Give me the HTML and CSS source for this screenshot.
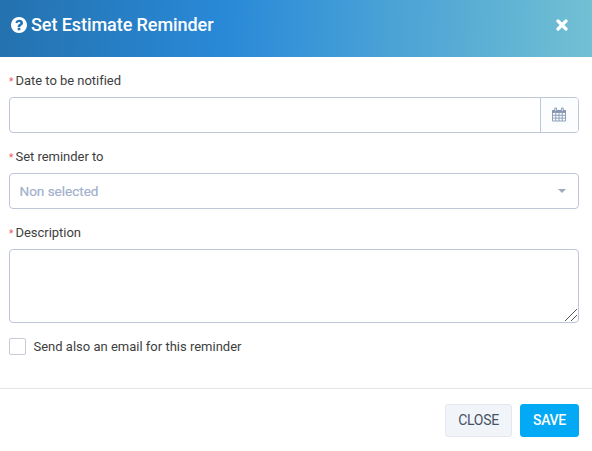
FILE: index.html
```html
<!DOCTYPE html>
<html lang="en">
<head>
<meta charset="utf-8">
<title>Set Estimate Reminder</title>
<link rel="stylesheet" href="styles.css">
</head>
<body>
<form class="modal">
  <header class="modal-header">
    <svg class="help" viewBox="128 128 1536 1536"><path fill="currentColor" d="M1024 1376v-192q0-14-9-23t-23-9h-192q-14 0-23 9t-9 23v192q0 14 9 23t23 9h192q14 0 23-9t9-23zm256-672q0-88-55.500-163t-138.500-116-170.500-41q-243 0-371 213-15 24 8 42l132 100q7 6 19 6 16 0 25-12 53-68 86-92 34-24 86-24 48 0 85.500 26t37.500 59q0 38-20 61t-68 45q-63 28-115.500 86.500t-52.500 125.500v36q0 14 9 23t23 9h192q14 0 23-9t9-23q0-19 21.500-49.500t54.500-49.500q32-18 49-28.500t46-35 44.500-48 28-60.500 12.500-81zm384 192q0 209-103 385.500t-279.500 279.500-385.500 103-385.500-103-279.500-279.500-103-385.500 103-385.500 279.500-279.500 385.500-103 385.500 103 279.500 279.500 103 385.500z"/></svg>
    <h1 class="title"><span>Set Estimate Reminder</span></h1>
    <svg class="dismiss" viewBox="0 0 12 12"><path d="M2 2l8 8M10 2l-8 8" stroke="currentColor" stroke-width="3.2" stroke-linecap="round"/></svg>
  </header>
  <main class="modal-body">
    <label class="label"><span class="req">*</span>Date to be notified</label>
    <div class="control date">
      <span class="addon">
        <svg class="calendar" viewBox="0 0 14 15" fill="none" stroke="currentColor"><path d="M.5 3.500h13v10.500H.5zM.5 5.500h13M.5 8.300h13M.5 11.100h13M3.800 5.500V14M7 5.500V14M10.200 5.500V14" stroke-width=".9"/><path d="M.5 3.500h13v1.500H.5z" fill="currentColor"/><path d="M3.700 1.800v1.800M10.300 1.800v1.800" stroke-width="2.800" stroke-linecap="round"/><path d="M3.700 1.800v1.800M10.300 1.800v1.800" stroke="#eef2fa" stroke-width=".9" stroke-linecap="round"/></svg>
      </span>
    </div>
    <label class="label"><span class="req">*</span>Set reminder to</label>
    <div class="control select"><span>Non selected</span><i class="caret"></i></div>
    <label class="label"><span class="req">*</span>Description</label>
    <div class="control area">
      <svg class="grip" viewBox="0 0 12 12"><path d="M0 12L12 0M6 12l6-6" stroke="#555" stroke-width="1"/></svg>
    </div>
    <div class="check"><i class="box"></i><span>Send also an email for this reminder</span></div>
  </main>
  <footer class="modal-footer">
    <button type="button" class="btn close">CLOSE</button>
    <button type="button" class="btn save">SAVE</button>
  </footer>
</form>
</body>
</html>
```
FILE: styles.css
```css
* { box-sizing: border-box; }
body { margin: 0; background: #fff; font-family: Roboto, "Liberation Sans", sans-serif; font-size: 13px; color: #3e3e40; overflow: hidden; }
.modal { height: 451px; display: flex; flex-direction: column; }
.modal-header { height: 57px; flex: none; display: flex; align-items: center; padding: 0 24px 7px 11px; color: #fff; background: linear-gradient(92deg, #2472ae 0%, #2989d8 38%, #72c0d3 100%); }
.help { width: 16px; height: 16px; margin-right: 4px; }
.title { margin: 0; flex: 1; font-size: 18px; line-height: 24px; font-weight: 500; letter-spacing: -.07px; }
.dismiss { width: 12px; height: 12px; }
.modal-body { height: 331px; flex: none; padding: 14px 13px 0 9px; }
.label { display: flex; height: 20px; line-height: 20px; margin-bottom: 6px; letter-spacing: -.03px; }
.req { width: 6.500px; flex: none; padding-top: 1px; font-size: 10px; color: #f0545c; }
.control { height: 36px; border: 1px solid #bfc6d8; border-radius: 4px; margin-bottom: 14px; display: flex; }
.date { justify-content: flex-end; }
.addon { width: 38px; border-left: 1px solid #bfc6d8; background: #fbfdff; border-radius: 0 3px 3px 0; display: flex; align-items: center; justify-content: center; padding: 0 2px 2px 0; }
.calendar { width: 14px; height: 15px; color: #8797b3; }
.select { align-items: center; justify-content: space-between; padding: 0 12px 0 9.500px; color: #a1b0cc; font-size: 13.500px; -webkit-text-stroke: .2px #a1b0cc; }
.caret { border: 4px solid transparent; border-top-color: #a1a9bd; border-bottom: 0; }
.area { height: 74px; margin-bottom: 15px; align-items: flex-end; justify-content: flex-end; padding: 1px; }
.grip { width: 12px; height: 12px; }
.check { display: flex; align-items: center; height: 17px; }
.box { width: 17px; height: 17px; border: 1px solid #c5cad6; border-radius: 2px; margin-right: 7.500px; }
.modal-footer { flex: 1; border-top: 1px solid #e3e5e8; display: flex; justify-content: flex-end; gap: 8px; padding: 15px 13px 0; }
.btn { height: 33px; padding: 0 0 1px; font: 14px Roboto, "Liberation Sans", sans-serif; letter-spacing: -.3px; border-radius: 3px; }
.close { width: 67px; color: #475164; background: #f1f5f9; border: 1px solid #e4e8ee; }
.save { width: 59px; color: #fff; background: #03a9f4; border: 1px solid #03a9f4; font-weight: 500; }
```
